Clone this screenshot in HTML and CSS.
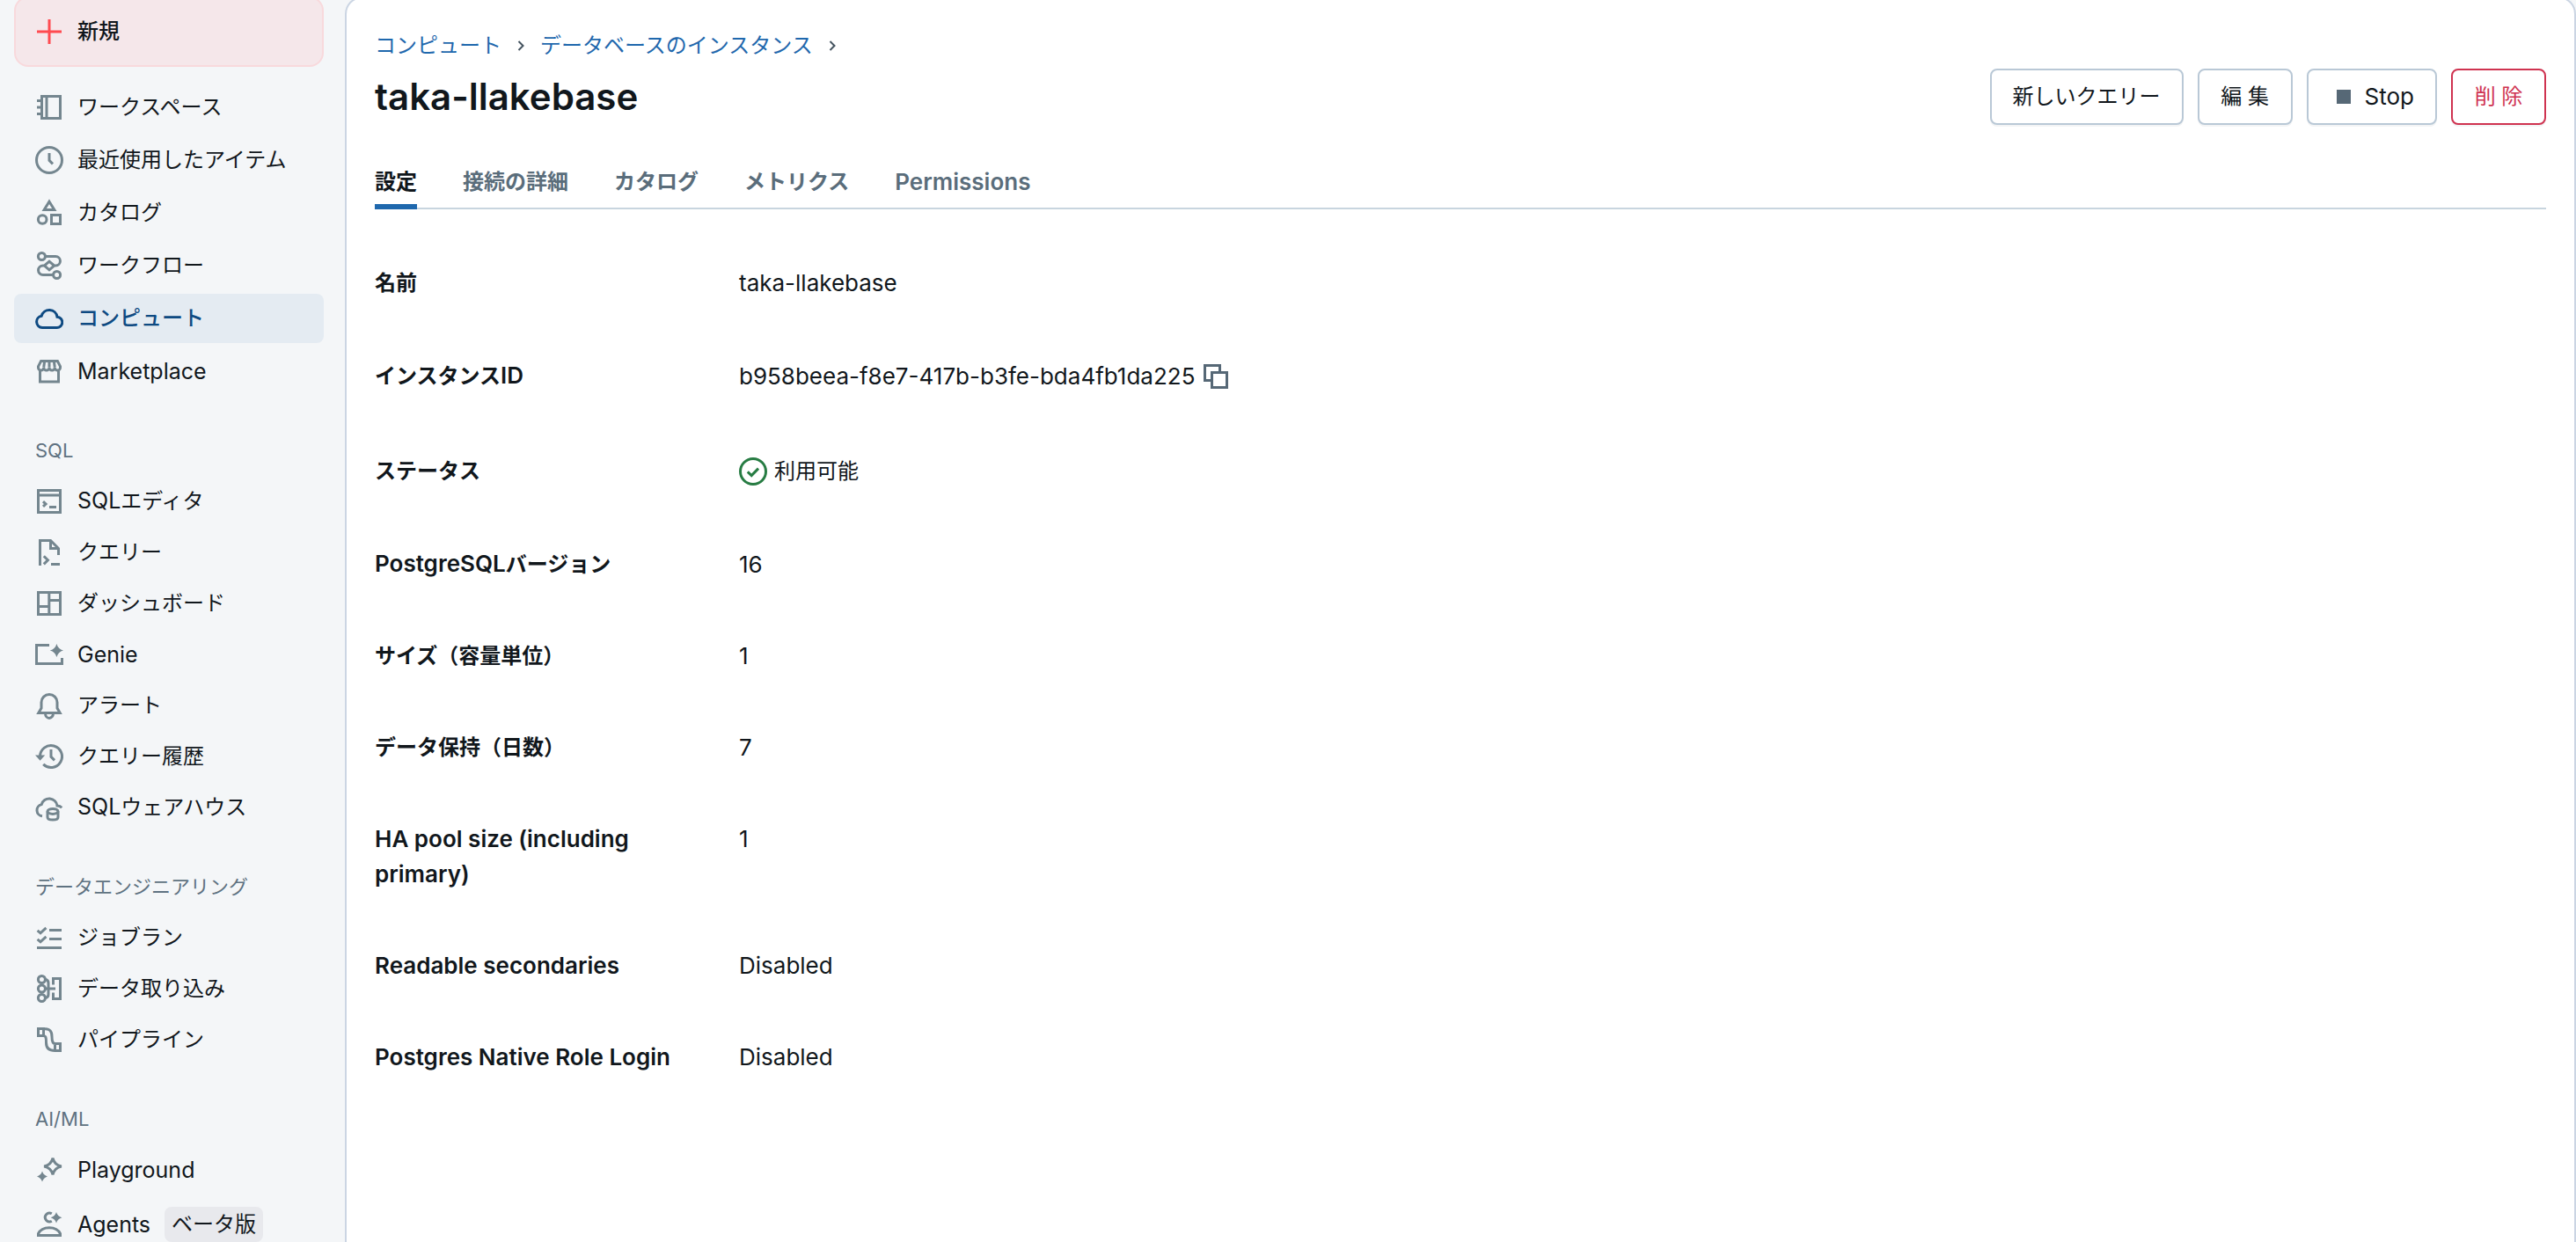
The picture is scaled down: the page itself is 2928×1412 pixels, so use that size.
FILE: index.html
```html
<!DOCTYPE html>
<html lang="ja">
	<head>
		<meta charset="UTF-8">
		<title>taka-llakebase</title>
		<link rel="stylesheet" href="styles.css">
	</head>
	<body>
		<div class="app">
			<nav class="sidebar">
				<button type="button" class="new-btn">
					<svg class="icon" viewBox="0 0 16 16"><path d="M8 1v14M1 8h14"/></svg>
					<span>新規</span>
				</button>

				<ul class="menu menu-top">
					<li><a href="#">
						<svg class="icon" viewBox="0 0 16 16"><path d="M3.75 1.75h10.5v12.5H3.75zM6.5 2v12M1 4.25h2.5M1 8h2.5M1 11.75h2.5"/></svg>
						<span>ワークスペース</span>
					</a></li>
					<li><a href="#">
						<svg class="icon" viewBox="0 0 16 16"><circle cx="8" cy="8" r="7.25"/><path d="M8 4v4.2l2 2"/></svg>
						<span>最近使用したアイテム</span>
					</a></li>
					<li><a href="#">
						<svg class="icon" viewBox="0 0 16 16"><path d="M8 1.6l2.9 4.65H5.1z"/><circle cx="4.1" cy="11.75" r="2.4"/><path d="M9.25 9.25h5v5h-5z"/></svg>
						<span>カタログ</span>
					</a></li>
					<li><a href="#">
						<svg class="icon" viewBox="0 0 16 16"><circle cx="3.7" cy="2.75" r="2"/><circle cx="12.3" cy="13.25" r="2"/><path d="M5.7 2.75h5.9a2.6 2.6 0 0 1 0 5.25h-.8L8 10.4 5.2 8 8 5.6 10.8 8M5.2 8h-.8a2.6 2.6 0 0 0 0 5.25h5.9"/></svg>
						<span>ワークフロー</span>
					</a></li>
					<li><a href="#" class="active">
						<svg class="icon" viewBox="0 0 16 16"><path d="M4 13.25h8.2a3.05 3.05 0 0 0 .3-6.1A4.55 4.55 0 0 0 3.6 6.6 3.35 3.35 0 0 0 4 13.25z"/></svg>
						<span>コンピュート</span>
					</a></li>
					<li><a href="#">
						<svg class="icon" viewBox="0 0 16 16"><path d="M2.75 7.5v6.5h10.5V7.5M3.3 2.25h9.4l1.55 3v.7a1.55 1.55 0 0 1-3.1 0 1.57 1.57 0 0 1-3.15 0 1.57 1.57 0 0 1-3.15 0 1.55 1.55 0 0 1-3.1 0v-.7zM5.3 2.5l-.45 3.4M8 2.5v3.4M10.7 2.5l.45 3.4"/></svg>
						<span class="en">Marketplace</span>
					</a></li>
				</ul>

				<h2 class="menu-title">SQL</h2>
				<ul class="menu">
					<li><a href="#">
						<svg class="icon" viewBox="0 0 16 16"><path d="M1.75 1.75h12.5v12.5H1.75zM2 4.5h12M4.5 8.1L6 9.5l-1.5 1.4M8 11.25h4"/></svg>
						<span><span class="en-part">SQL</span>エディタ</span>
					</a></li>
					<li><a href="#">
						<svg class="icon" viewBox="0 0 16 16"><path d="M2.75 15.5V1.25h6l4.5 4.5V9.5M8.75 1.5v4.25h4.5M4.9 10.1l2.3 2.3-2.3 2.3M9 14.75h5"/></svg>
						<span>クエリー</span>
					</a></li>
					<li><a href="#">
						<svg class="icon" viewBox="0 0 16 16"><path d="M1.75 1.75h12.5v12.5H1.75zM7.9 2v12M8 6.25h6M2 9.75h6"/></svg>
						<span>ダッシュボード</span>
					</a></li>
					<li><a href="#">
						<svg class="icon" viewBox="0 0 16 16"><path d="M8 2.75H.75v10.5h14.5V10"/><path class="fill" d="M12.2 2q.8 2.9 3.8 3.75-3 .85-3.8 3.75-.8-2.9-3.8-3.75 3-.85 3.8-3.75z"/></svg>
						<span class="en">Genie</span>
					</a></li>
					<li><a href="#">
						<svg class="icon" viewBox="0 0 16 16"><path d="M1.9 12.25h12.2L12.5 9.5V6.25a4.5 4.5 0 0 0-9 0V9.5zM5.75 12.5a2.25 2.7 0 0 0 4.5 0"/></svg>
						<span>アラート</span>
					</a></li>
					<li><a href="#">
						<svg class="icon" viewBox="0 0 16 16"><path d="M2.75 8A6.25 6.25 0 1 1 4.6 12.45M9 4v4.2l2 2"/><path class="fill" d="M0 7.2h5.6L2.8 10.4z"/></svg>
						<span>クエリー履歴</span>
					</a></li>
					<li><a href="#">
						<svg class="icon" viewBox="0 0 16 16"><path d="M4 12.9A3.35 3.35 0 0 1 3.6 6.3 4.55 4.55 0 0 1 12.5 7q1.7.1 2.6 1.1"/><ellipse cx="10" cy="10.2" rx="3" ry="1.5"/><path d="M7 10.2v3.3c0 2 6 2 6 0v-3.3"/></svg>
						<span><span class="en-part">SQL</span>ウェアハウス</span>
					</a></li>
				</ul>

				<h2 class="menu-title">データエンジニアリング</h2>
				<ul class="menu">
					<li><a href="#">
						<svg class="icon" viewBox="0 0 16 16"><path d="M8 3.75h7M8 8.75h7M1 13.75h14M1.3 3.9L3 5.4l3.2-3M1.3 8.9L3 10.4l3.2-3"/></svg>
						<span>ジョブラン</span>
					</a></li>
					<li><a href="#">
						<svg class="icon" viewBox="0 0 16 16"><circle cx="3.7" cy="2.75" r="2"/><circle cx="3.7" cy="8" r="2"/><circle cx="3.7" cy="13.25" r="2"/><path d="M5.7 2.75q1.8.2 1.8 2v6.5q0 1.8-1.8 2M5.7 8h5.8M10.25 5.75v-3.5h4v11.5h-4v-3.5"/></svg>
						<span>データ取り込み</span>
					</a></li>
					<li><a href="#">
						<svg class="icon" viewBox="0 0 16 16"><path d="M1.75 1.75h3v4h-3zM11.25 10.25h3v4h-3zM4.75 1.75c4 0 4.75 1.75 4.75 4.5 0 2.5.3 4 1.75 4M4.75 5.75c1.2 0 1.5.75 1.5 4 0 3 1.5 4.5 5 4.5"/></svg>
						<span>パイプライン</span>
					</a></li>
				</ul>

				<h2 class="menu-title">AI/ML</h2>
				<ul class="menu">
					<li><a href="#">
						<svg class="icon" viewBox="0 0 16 16"><path d="M10 1.3q.9 3.8 4.9 4.7-4 .9-4.9 4.7Q9.1 6.9 5.1 6 9.100 5.1 10 1.3z"/><path class="fill" d="M4 8.8q.7 2.3 3 3-2.3.7-3 3-.7-2.3-3-3 2.3-.7 3-3z"/></svg>
						<span class="en">Playground</span>
					</a></li>
					<li><a href="#" class="with-tag">
						<svg class="icon" viewBox="0 0 16 16"><path d="M1.75 14.25v-1C4 8.7 12 8.7 14.25 13.25v1zM9.4 1.9a2.45 2.45 0 1 0 0 4.2"/><path class="fill" d="M12 1q.7 2.5 3.2 3.1Q12.7 4.8 12 7.2q-.7-2.4-3.2-3.1Q11.3 3.5 12 1z"/></svg>
						<span class="en">Agents</span>
						<span class="tag">ベータ版</span>
					</a></li>
				</ul>
			</nav>

			<main class="content">
				<div class="breadcrumb">
					<a href="#">コンピュート</a>
					<svg class="chevron" viewBox="0 0 8 12"><path d="M1.5 1l5 5-5 5"/></svg>
					<a href="#">データベースのインスタンス</a>
					<svg class="chevron" viewBox="0 0 8 12"><path d="M1.5 1l5 5-5 5"/></svg>
				</div>

				<header class="title-bar">
					<h1>taka-llakebase</h1>
					<div class="actions">
						<button type="button" class="btn">新しいクエリー</button>
						<button type="button" class="btn">編 集</button>
						<button type="button" class="btn en"><svg class="icon" viewBox="0 0 16 16"><path class="fill" d="M4 4h8v8H4z"/></svg>Stop</button>
						<button type="button" class="btn btn-danger">削 除</button>
					</div>
				</header>

				<div class="tabs" role="tablist">
					<button type="button" role="tab" class="tab selected" aria-selected="true">設定</button>
					<button type="button" role="tab" class="tab">接続の詳細</button>
					<button type="button" role="tab" class="tab">カタログ</button>
					<button type="button" role="tab" class="tab">メトリクス</button>
					<button type="button" role="tab" class="tab en">Permissions</button>
				</div>

				<dl class="details">
					<div class="row"><dt>名前</dt><dd class="en">taka-llakebase</dd></div>
					<div class="row row-icon">
						<dt>インスタンス<span class="en-part">ID</span></dt>
						<dd class="en">b958beea-f8e7-417b-b3fe-bda4fb1da225
							<button type="button" class="copy" aria-label="コピー"><svg class="icon" viewBox="0 0 16 16"><path d="M5 10.25H1.75v-8.5h8.5V5M5.75 5.75h8.5v8.5h-8.5z"/></svg></button>
						</dd>
					</div>
					<div class="row row-icon">
						<dt>ステータス</dt>
						<dd><svg class="icon ok" viewBox="0 0 16 16"><circle cx="8" cy="8" r="7.25"/><path d="M4.9 8.2l2.2 2.1 3.9-4"/></svg>利用可能</dd>
					</div>
					<div class="row"><dt><span class="en-part">PostgreSQL</span>バージョン</dt><dd class="en">16</dd></div>
					<div class="row"><dt>サイズ（容量単位）</dt><dd class="en">1</dd></div>
					<div class="row"><dt>データ保持（日数）</dt><dd class="en">7</dd></div>
					<div class="row"><dt class="en">HA pool size (including primary)</dt><dd class="en">1</dd></div>
					<div class="row"><dt class="en">Readable secondaries</dt><dd class="en">Disabled</dd></div>
					<div class="row"><dt class="en">Postgres Native Role Login</dt><dd class="en">Disabled</dd></div>
				</dl>
			</main>
		</div>
	</body>
</html>
```
FILE: styles.css
```css
*{padding:0;margin:0;box-sizing:border-box;}
body{
	background:#f4f6f8;
	color:#11171c;
	font-family:Inter,"Noto Sans CJK JP",sans-serif;
	font-size:24px;
	line-height:40px;
}
ul{list-style:none;}
a{text-decoration:none;color:inherit;}
button{font:inherit;color:inherit;background:none;border:0;cursor:pointer;}

.app{display:flex;height:100vh;overflow:hidden;}

/* latin text runs a little larger than the japanese */
.en,.en-part{font-size:26px;}
.en-part{line-height:1;}
.sidebar .en,.sidebar .en-part{font-size:25px;}

.icon{
	width:32px;
	height:32px;
	flex:none;
	fill:none;
	stroke:currentColor;
	stroke-width:1.5;
}
.icon .fill{fill:currentColor;stroke:none;}

/* sidebar */
.sidebar{width:392px;flex:none;padding:0 24px 0 16px;margin-top:-4px;}
.new-btn{
	display:flex;
	align-items:center;
	gap:16px;
	width:100%;
	height:80px;
	padding:0 22px;
	border:2px solid #f8d9dc;
	border-radius:16px;
	background:#f5e7ea;
	font-weight:500;
}
.new-btn .icon{color:#ff4b50;}
.menu{display:flex;flex-direction:column;gap:2px;}
.menu-top{gap:4px;margin-top:18px;}
.menu a{
	display:flex;
	align-items:center;
	gap:16px;
	padding:8px 24px;
	border-radius:8px;
}
.menu .icon{color:#74868f;}
.menu .active{background:#e4ebf2;color:#0e4a82;font-weight:500;}
.menu .active .icon{color:#0e4a82;}
.menu .with-tag{padding:12px 24px;}
.menu-title{
	margin:42px 0 10px;
	padding-left:24px;
	font-size:22px;
	font-weight:400;
	color:#5f7281;
}
.tag{padding:0 8px;border-radius:8px;background:#e8e9ed;}

/* content */
.content{
	flex:1;
	margin-top:-4px;
	padding:34px 32px 0;
	border:2px solid #cbd5e3;
	border-bottom:0;
	border-radius:20px 20px 0 0;
	background:#fff;
}
.breadcrumb{display:flex;align-items:center;gap:18px;color:#1f68ad;}
.chevron{width:8px;height:12px;fill:none;stroke:#44535f;stroke-width:2;}
.title-bar{display:flex;justify-content:space-between;align-items:center;margin-top:6px;}
h1{font-size:42px;font-weight:600;line-height:64px;}
.actions{display:flex;gap:16px;}
.btn{
	display:flex;
	align-items:center;
	justify-content:center;
	gap:8px;
	min-width:108px;
	height:64px;
	padding:0 24px;
	border:2px solid #b9c8d6;
	border-radius:8px;
	background:#fff;
	box-shadow:0 2px 0 #f3f4f5;
}
.btn .icon{color:#566876;}
.btn-danger{border-color:#cf3350;color:#cf3350;}

.tabs{display:flex;gap:52px;margin-top:44px;border-bottom:2px solid #c8d5df;}
.tab{
	height:52px;
	margin-bottom:-2px;
	padding-bottom:4px;
	border-bottom:6px solid transparent;
	font-weight:600;
	color:#5a6d7b;
}
.tab.selected{border-color:#1f68ad;color:#11171c;}

.details{display:flex;flex-direction:column;gap:64px;margin-top:64px;}
.row{display:grid;grid-template-columns:350px 1fr;column-gap:64px;}
.row dt{font-weight:600;}
.row dd{display:flex;align-items:center;align-self:start;gap:8px;}
.row-icon{min-height:44px;align-items:center;}
.row-icon dd{align-self:center;}
.copy{display:flex;color:#566876;}
.ok{color:#277c43;}
```
